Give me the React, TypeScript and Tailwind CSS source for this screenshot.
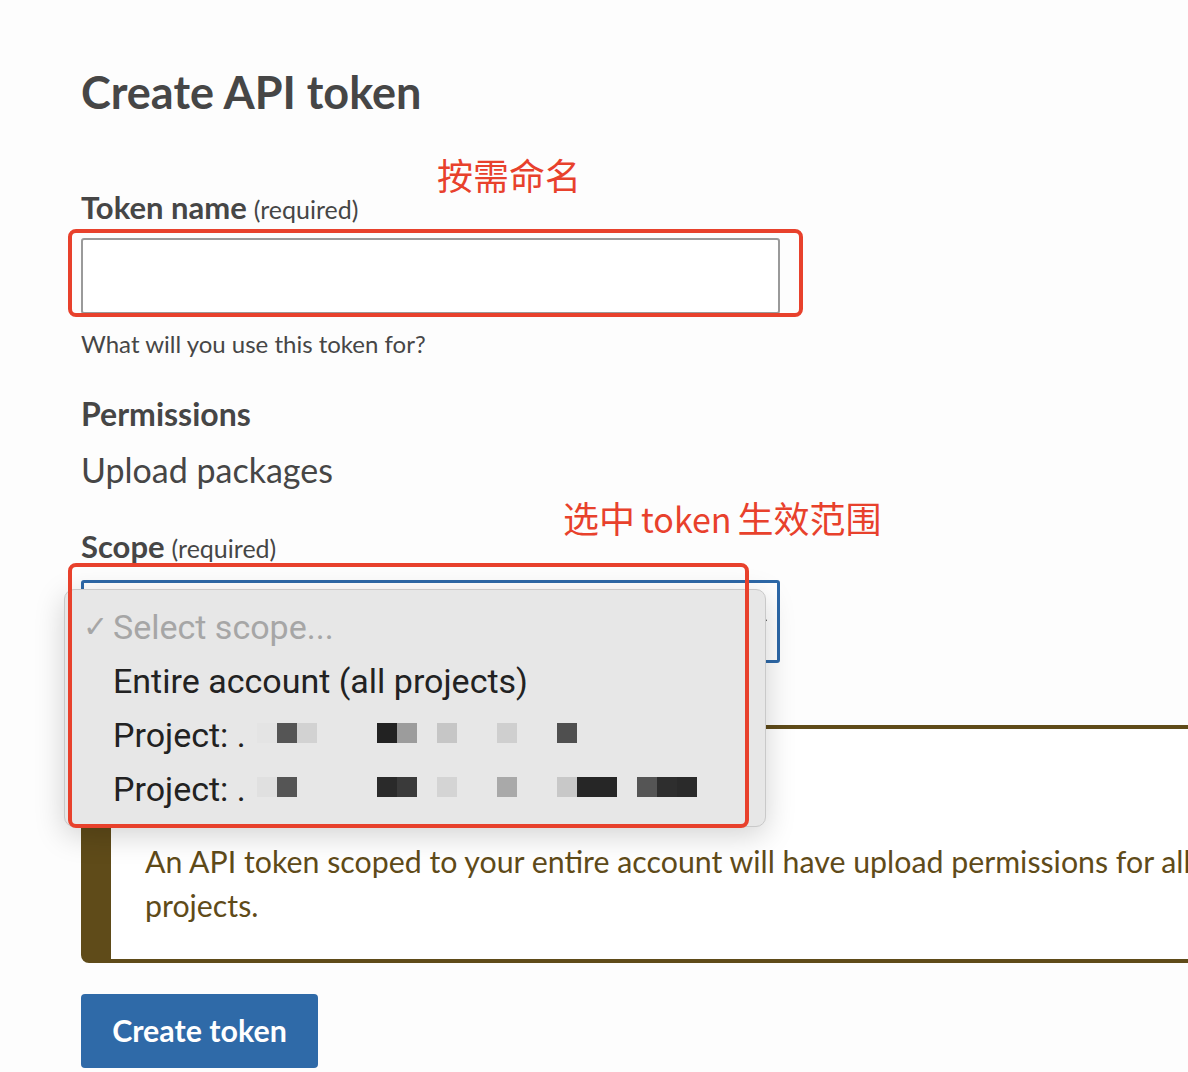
import React from 'react';

// pixelated (redacted) project names: [left, colour] per 20px block
const redactedRows: [number, string][][] = [
    [
        [256, '#e4e4e4'], [276, '#555555'], [296, '#d2d2d2'],
        [376, '#222222'], [396, '#9c9c9c'],
        [436, '#c6c6c6'],
        [496, '#cfcfcf'],
        [556, '#4f4f4f'],
    ],
    [
        [256, '#e0e0e0'], [276, '#555555'],
        [376, '#2a2a2a'], [396, '#3a3a3a'],
        [436, '#d4d4d4'],
        [496, '#a9a9a9'],
        [556, '#c8c8c8'], [576, '#262626'], [596, '#262626'],
        [636, '#555555'], [656, '#2e2e2e'], [676, '#2a2a2a'],
    ],
];

const Redacted = ({ blocks }: { blocks: [number, string][] }) => (
    <div className="absolute inset-y-0 left-0 w-full pointer-events-none">
        {blocks.map(([x, c], i) => (
            <span
                key={i}
                className="absolute top-[15px] h-[20px] w-[20px]"
                style={{ left: x - 64, background: c }}
            />
        ))}
    </div>
);

const FieldLabel = ({ children }: { children: React.ReactNode }) => (
    <div className="h-[36px] flex items-baseline gap-[7px]">
        <span className="text-[31px] font-bold leading-[36px]">{children}</span>
        <span className="text-[25px] leading-[36px]">(required)</span>
    </div>
);

const App = () => {
    return (
        <div className="relative w-[1188px] h-[1072px] overflow-hidden bg-[#fdfdfd] text-[#464646] font-['Lato','Noto_Sans',sans-serif]">
            <div className="pl-[81px] pt-[62px]">
                <h1 className="text-[45px] leading-[60px] font-bold">Create API token</h1>

                {/* Token name */}
                <div className="mt-[67px]">
                    <FieldLabel>Token name</FieldLabel>
                </div>
                <div className="mt-[13px] h-[76px] w-[699px] border-2 border-[#9a9a9a] rounded-[3px] bg-white" />
                <p className="mt-[15px] text-[24px] leading-[30px]">What will you use this token for?</p>

                {/* Permissions */}
                <p className="mt-[38px] text-[32px] leading-[34px] font-bold">Permissions</p>
                <p className="mt-[18px] text-[34px] leading-[42px]">Upload packages</p>

                {/* Scope */}
                <div className="mt-[37px]">
                    <FieldLabel>Scope</FieldLabel>
                </div>
                <div className="relative mt-[16px] h-[83px] w-[699px] border-[3px] border-[#2d68a7] rounded-[3px] bg-white">
                    <svg
                        className="absolute right-[6px] top-[30px] h-[18px] w-[18px] text-[#333]"
                        viewBox="0 0 24 24"
                        fill="none"
                        stroke="currentColor"
                        strokeWidth="2"
                    >
                        <path d="M6 9l6 6 6-6" />
                    </svg>
                </div>

                {/* Warning callout */}
                <div className="mt-[62px] h-[238px] w-[1200px] border-t-4 border-b-4 border-l-[30px] border-[#5f4b19] rounded-bl-[8px] pl-[34px] pt-[110px] bg-white">
                    <p className="text-[30.3px] leading-[44px] text-[#5f4b19]">
                        An API token scoped to your entire account will have upload permissions for all
                        <br />
                        projects.
                    </p>
                </div>

                <button className="mt-[31px] h-[74px] w-[237px] rounded-[4px] bg-[#2f6aa8] text-white text-[30.4px] font-bold">
                    Create token
                </button>
            </div>

            {/* Native select popup */}
            <div className="absolute left-[64px] top-[589px] w-[702px] h-[238px] rounded-[10px] border border-[#c9c9c9] bg-[#e7e7e7] shadow-[0_8px_30px_rgba(0,0,0,0.18)] pt-[10px] font-['Roboto','Liberation_Sans',sans-serif] text-[34px]">
                <div className="relative h-[54px] flex items-center text-[#a6a6a6]">
                    <span className="w-[48px] pl-[18px] text-[30px] leading-none">✓</span>
                    <span>Select scope...</span>
                </div>
                <div className="relative h-[54px] flex items-center text-[#222] pl-[48px]">
                    Entire account (all projects)
                </div>
                {redactedRows.map((row, i) => (
                    <div key={i} className="relative h-[54px] flex items-center text-[#222] pl-[48px]">
                        <span>Project: .</span>
                        <Redacted blocks={row} />
                    </div>
                ))}
            </div>

            {/* Annotations */}
            <div className="absolute left-[68px] top-[229px] w-[735px] h-[88px] border-4 border-[#e8412c] rounded-[8px]" />
            <div className="absolute left-[68px] top-[563px] w-[681px] h-[265px] border-4 border-[#e8412c] rounded-[8px]" />
            <p className="absolute left-[437px] top-[152px] text-[36px] leading-[44px] text-[#e8412c] font-['Noto_Sans_CJK_SC',sans-serif]">
                按需命名
            </p>
            <p className="absolute left-[563px] top-[495px] flex items-baseline text-[36px] leading-[44px] text-[#e8412c] font-['Noto_Sans_CJK_SC',sans-serif]">
                <span>选中</span>
                <span className="mx-[6px] text-[34px]">token</span>
                <span>生效范围</span>
            </p>
        </div>
    );
};

export default App;
